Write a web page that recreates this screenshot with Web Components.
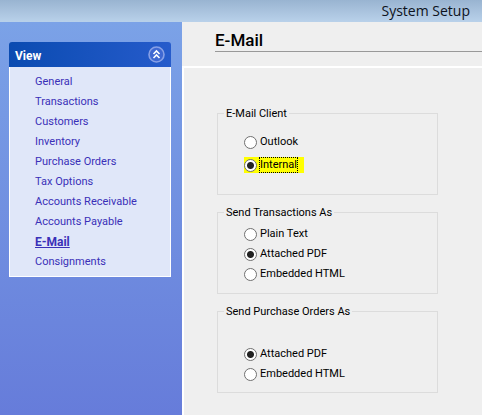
<!DOCTYPE html>
<html lang="en">
<head>
<meta charset="utf-8">
<title>System Setup</title>
<style>
html, body { height: 100%; margin: 0; }
body { font: 11px/16px Roboto, "Liberation Sans", sans-serif; color: #000; background: #efefef; }
</style>
</head>
<body>
<setup-window caption="System Setup">
  <nav-panel slot="side" heading="View">
    <nav-link>General</nav-link>
    <nav-link>Transactions</nav-link>
    <nav-link>Customers</nav-link>
    <nav-link>Inventory</nav-link>
    <nav-link>Purchase Orders</nav-link>
    <nav-link>Tax Options</nav-link>
    <nav-link>Accounts Receivable</nav-link>
    <nav-link>Accounts Payable</nav-link>
    <nav-link current>E-Mail</nav-link>
    <nav-link>Consignments</nav-link>
  </nav-panel>
  <page-heading slot="heading">E-Mail</page-heading>
  <radio-group legend="E-Mail Client" options="Outlook|Internal" selected="Internal" marked="Internal" style="--top: 12px; --gap: 7px"></radio-group>
  <radio-group legend="Send Transactions As" options="Plain Text|Attached PDF|Embedded HTML" selected="Attached PDF" style="--top: 5px"></radio-group>
  <radio-group legend="Send Purchase Orders As" options="Attached PDF|Embedded HTML" selected="Attached PDF" style="--top: 26px"></radio-group>
</setup-window>
<script>
class SetupWindow extends HTMLElement {
  constructor() {
    super();
    this.attachShadow({ mode: "open" }).innerHTML = `
<style>
:host { display: grid; grid-template: auto 1fr / 182px 1fr; min-height: 100vh; }
header { grid-column: 1 / -1; height: 22px; box-sizing: border-box; padding-right: 12px; text-align: right;
  font: 14px/22px "Open Sans", "Noto Sans", sans-serif; color: #0c1220;
  background: linear-gradient(#99b4d1, #b9d1ea); }
aside { padding: 20px 11px 20px 9px; background: linear-gradient(#7ba2e7, #667cda); }
main { display: flex; flex-direction: column; min-width: 0; }
.body { flex: 1; display: flex; flex-direction: column; gap: 9px; padding: 37px 44px 20px 33px;
  border: solid #fff; border-width: 2px 0 0 2px; }
</style>
<header></header>
<aside><slot name="side"></slot></aside>
<main><slot name="heading"></slot><div class="body"><slot></slot></div></main>`;
    this.shadowRoot.querySelector("header").textContent = this.getAttribute("caption");
  }
}
class NavPanel extends HTMLElement {
  constructor() {
    super();
    this.attachShadow({ mode: "open" }).innerHTML = `
<style>
:host { display: block; }
header { display: flex; align-items: center; justify-content: space-between; height: 25px; padding: 0 6px;
  border-radius: 3px 3px 0 0; background: linear-gradient(90deg, #0a4bb1, #265bcb); }
h2 { margin: 0; padding-top: 2px; font: bold 12px/16px Roboto, sans-serif; color: #fff; }
button { width: 17px; height: 17px; padding: 0; border: 0; background: none; }
svg { display: block; }
nav { padding: 5px 25px 4px; border: solid #fff; border-width: 0 1px 1px; background: #e0e7f9; }
</style>
<header><h2></h2><button type="button" aria-label="Collapse">
<svg width="17" height="17" viewBox="0 0 17 17"><circle cx="8.5" cy="8.5" r="7.5" fill="#3f68d2" stroke="#87a0e6" stroke-width="1.6"/>
<path d="M5.5 8 8.5 5l3 3M5.5 12l3-3 3 3" fill="none" stroke="#fff" stroke-width="1.6"/></svg>
</button></header>
<nav><slot></slot></nav>`;
    this.shadowRoot.querySelector("h2").textContent = this.getAttribute("heading");
  }
}
class NavLink extends HTMLElement {
  constructor() {
    super();
    this.attachShadow({ mode: "open" }).innerHTML = `
<style>
:host { display: block; line-height: 20px; }
a { color: #3a30b8; text-decoration: none; white-space: nowrap; }
:host([current]) { font-size: 12px; font-weight: bold; }
:host([current]) a { text-decoration: underline; }
</style>
<a href="#"><slot></slot></a>`;
  }
}
class PageHeading extends HTMLElement {
  constructor() {
    super();
    this.attachShadow({ mode: "open" }).innerHTML = `
<style>
:host { display: block; padding: 8px 0 14px 33px; }
h1 { margin: 0; padding-bottom: 1px; border-bottom: 1px solid #999; font: 500 17px/20px Roboto, sans-serif; }
</style>
<h1><slot></slot></h1>`;
  }
}
class RadioGroup extends HTMLElement {
  constructor() {
    super();
    this.attachShadow({ mode: "open" }).innerHTML = `
<style>
:host { display: block; }
fieldset { box-sizing: border-box; min-width: 0; min-height: 90px; margin: 0; padding: 0 6px; border: 1px solid #dcdcdc; }
legend { padding: 0 2px; line-height: 17px; }
.list { display: flex; flex-direction: column; align-items: flex-start; gap: var(--gap, 4px); padding: var(--top) 0 0 20px; }
label { display: flex; align-items: center; gap: 2px; height: 16px; padding-right: 6px; white-space: nowrap; }
label.marked { background: #ff0; }
.marked span { outline: 1px dotted #000; outline-offset: -1px; }
span { padding: 0 1px; line-height: 16px; }
input { appearance: none; box-sizing: border-box; width: 13px; height: 13px; margin: 0; border: 1px solid #707070;
  border-radius: 50%; background: #fff; }
input:checked { background: radial-gradient(circle, #222 3px, #fff 4px); }
</style>
<fieldset><legend></legend><div class="list"></div></fieldset>`;
    const name = this.getAttribute("legend");
    this.shadowRoot.querySelector("legend").textContent = name;
    const list = this.shadowRoot.querySelector(".list");
    for (const text of this.getAttribute("options").split("|")) {
      const label = document.createElement("label");
      const input = document.createElement("input");
      const span = document.createElement("span");
      input.type = "radio";
      input.name = name;
      input.checked = text === this.getAttribute("selected");
      span.textContent = text;
      if (text === this.getAttribute("marked")) label.className = "marked";
      label.append(input, span);
      list.append(label);
    }
  }
}
customElements.define("setup-window", SetupWindow);
customElements.define("nav-panel", NavPanel);
customElements.define("nav-link", NavLink);
customElements.define("page-heading", PageHeading);
customElements.define("radio-group", RadioGroup);
</script>
</body>
</html>
